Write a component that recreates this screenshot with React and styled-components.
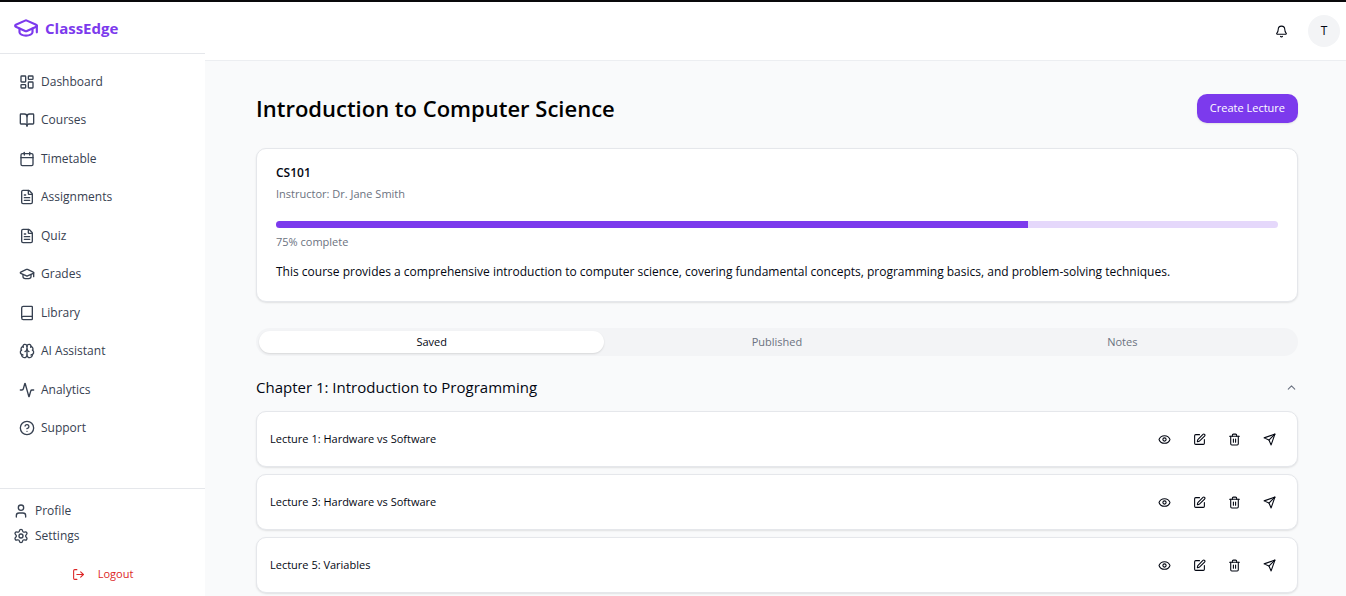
import React from "react";
import styled, { createGlobalStyle, css } from "styled-components";
import {
  LayoutDashboard, BookOpen, Calendar, FileText, GraduationCap, Book, Brain,
  Activity, CircleHelp, User, Settings, LogOut, Bell, Eye, SquarePen, Trash2,
  ChevronUp,
} from "lucide-react";

const GlobalStyle = createGlobalStyle`
  *, *::before, *::after { box-sizing: border-box; }
  body {
    margin: 0;
    background: #f9fafb;
    color: #030712;
    font-family: "Trebuchet MS", "Open Sans", sans-serif;
    font-size: 12px;
    line-height: 20px;
  }
  h1, h2, h3, p, ul { margin: 0; padding: 0; }
  ul { list-style: none; }
  button { font: inherit; color: inherit; background: none; border: 0; padding: 0; cursor: pointer; }
  a { color: inherit; text-decoration: none; }
  svg { display: block; flex: none; }
`;

const Shell = styled.div`
  display: flex;
  height: 100vh;
  border-top: 2px solid #09090b;
  overflow: hidden;
`;

const Sidebar = styled.aside`
  display: flex;
  flex-direction: column;
  flex: none;
  width: 205px;
  background: #fff;
`;

const Brand = styled.a`
  display: flex;
  align-items: center;
  gap: 6px;
  height: 52px;
  padding: 0 13px;
  border-bottom: 1px solid #e5e7eb;
  color: #7c3aed;
  font-size: 15px;
  font-weight: 700;
`;

const NavList = styled.ul`
  display: flex;
  flex-direction: column;
  flex: 1;
  justify-content: space-between;
  padding: 12px 13px 44px;
`;

const NavLink = styled.a`
  display: flex;
  align-items: center;
  gap: 6px;
  height: 32px;
  padding: 0 6px;
  color: #374151;
`;

const AccountArea = styled.div`
  display: flex;
  flex-direction: column;
  gap: 5px;
  padding: 12px 13px 8px;
  border-top: 1px solid #e5e7eb;
`;

const AccountLink = styled.a`
  display: flex;
  align-items: center;
  gap: 6px;
  color: #374151;
`;

const LogoutButton = styled.button`
  display: flex;
  align-items: center;
  justify-content: center;
  gap: 13px;
  height: 28px;
  margin-top: 9px;
  color: #dc2626;
  font-size: 11px;
`;

const Main = styled.div`
  display: flex;
  flex-direction: column;
  flex: 1;
  min-width: 0;
`;

const TopBar = styled.header`
  display: flex;
  align-items: center;
  justify-content: flex-end;
  flex: none;
  gap: 20px;
  height: 59px;
  padding: 0 6px;
  background: #fff;
  border-bottom: 1px solid #eceef1;
`;

const Avatar = styled.button`
  width: 32px;
  height: 32px;
  border-radius: 50%;
  background: #f3f4f6;
`;

const Content = styled.main`
  flex: 1;
  min-height: 0;
  overflow-y: auto;
  padding: 31px 48px 0 51px;
`;

const TitleRow = styled.div`
  display: flex;
  align-items: center;
  justify-content: space-between;
  margin-bottom: 24px;
`;

const Title = styled.h1`
  font-size: 22px;
  line-height: 32px;
  font-weight: 600;
  color: #000;
`;

const PrimaryButton = styled.button`
  height: 29px;
  padding: 0 13px;
  border-radius: 10px;
  background: #7c3aed;
  color: #fff;
  font-size: 11px;
  font-weight: 500;
  box-shadow: 0 1px 2px rgba(0, 0, 0, 0.1);
`;

const card = css`
  background: #fff;
  border: 1px solid #e5e7eb;
  border-radius: 10px;
  box-shadow: 0 1px 2px rgba(0, 0, 0, 0.1);
`;

const CourseCard = styled.section`
  ${card}
  padding: 14px 19px 19px;
`;

const CourseCode = styled.h2`
  margin-bottom: 1px;
  font-size: 12px;
  font-weight: 600;
`;

const Muted = styled.p`
  color: #6b7280;
  font-size: 11px;
`;

const Track = styled.div`
  height: 7px;
  margin: 17px 0 4px;
  border-radius: 4px;
  background: #e5d8fb;
  overflow: hidden;
`;

const Fill = styled.div`
  height: 100%;
  background: #7c3aed;
`;

const Description = styled.p`
  margin-top: 10px;
  font-weight: 500;
`;

const Tabs = styled.div`
  display: grid;
  grid-template-columns: repeat(3, 1fr);
  height: 28px;
  margin: 26px 0 20px;
  padding: 3px;
  border-radius: 14px;
  background: #f3f4f6;
`;

const Tab = styled.button`
  border-radius: 11px;
  font-size: 11px;
  font-weight: 500;
  color: ${(p) => (p.$active ? "#030712" : "#6b7280")};
  background: ${(p) => (p.$active ? "#fff" : "transparent")};
  box-shadow: ${(p) => (p.$active ? "0 1px 2px rgba(0, 0, 0, 0.12)" : "none")};
`;

const ChapterToggle = styled.button`
  display: flex;
  align-items: center;
  justify-content: space-between;
  width: 100%;
  font-size: 15px;
  line-height: 22px;
  font-weight: 500;
`;

const LectureList = styled.ul`
  display: flex;
  flex-direction: column;
  gap: 7px;
  margin-top: 13px;
`;

const Lecture = styled.li`
  ${card}
  display: flex;
  align-items: center;
  justify-content: space-between;
  height: 56px;
  padding: 0 10px 0 13px;
`;

const LectureName = styled.h3`
  font-size: 11px;
  font-weight: 500;
`;

const Actions = styled.div`
  display: flex;
`;

const IconButton = styled.button`
  display: grid;
  place-items: center;
  width: 35px;
  height: 28px;
`;

function Send({ size }) {
  return (
    <svg width={size} height={size} viewBox="0 0 24 24" fill="none" stroke="currentColor" strokeWidth="2" strokeLinecap="round" strokeLinejoin="round">
      <path d="m22 2-7 20-4-9-9-4Z" />
      <path d="M22 2 11 13" />
    </svg>
  );
}

const navItems = [
  ["Dashboard", LayoutDashboard], ["Courses", BookOpen], ["Timetable", Calendar],
  ["Assignments", FileText], ["Quiz", FileText], ["Grades", GraduationCap],
  ["Library", Book], ["AI Assistant", Brain], ["Analytics", Activity], ["Support", CircleHelp],
];

const actions = [["View", Eye], ["Edit", SquarePen], ["Delete", Trash2], ["Publish", Send]];
const lectures = ["Lecture 1: Hardware vs Software", "Lecture 3: Hardware vs Software", "Lecture 5: Variables"];
const progress = 75;

export default function App() {
  return (
    <>
      <GlobalStyle />
      <Shell>
        <Sidebar>
          <Brand href="#"><GraduationCap size={26} />ClassEdge</Brand>
          <NavList>
            {navItems.map(([label, Icon]) => (
              <li key={label}><NavLink href="#"><Icon size={16} />{label}</NavLink></li>
            ))}
          </NavList>
          <AccountArea>
            <AccountLink href="#"><User size={16} />Profile</AccountLink>
            <AccountLink href="#"><Settings size={16} />Settings</AccountLink>
            <LogoutButton><LogOut size={13} />Logout</LogoutButton>
          </AccountArea>
        </Sidebar>
        <Main>
          <TopBar>
            <button aria-label="Notifications"><Bell size={13} /></button>
            <Avatar>T</Avatar>
          </TopBar>
          <Content>
            <TitleRow>
              <Title>Introduction to Computer Science</Title>
              <PrimaryButton>Create Lecture</PrimaryButton>
            </TitleRow>
            <CourseCard>
              <CourseCode>CS101</CourseCode>
              <Muted>Instructor: Dr. Jane Smith</Muted>
              <Track role="progressbar" aria-label="Course progress" aria-valuenow={progress}>
                <Fill style={{ width: `${progress}%` }} />
              </Track>
              <Muted>{progress}% complete</Muted>
              <Description>
                This course provides a comprehensive introduction to computer science, covering fundamental
                concepts, programming basics, and problem-solving techniques.
              </Description>
            </CourseCard>
            <Tabs role="tablist">
              {["Saved", "Published", "Notes"].map((t, i) => (
                <Tab key={t} role="tab" aria-selected={i === 0} $active={i === 0}>{t}</Tab>
              ))}
            </Tabs>
            <ChapterToggle aria-expanded="true">Chapter 1: Introduction to Programming<ChevronUp size={13} color="#6b7280" /></ChapterToggle>
            <LectureList>
              {lectures.map((name) => (
                <Lecture key={name}>
                  <LectureName>{name}</LectureName>
                  <Actions>
                    {actions.map(([label, Icon]) => (
                      <IconButton key={label} aria-label={label}><Icon size={13} /></IconButton>
                    ))}
                  </Actions>
                </Lecture>
              ))}
            </LectureList>
          </Content>
        </Main>
      </Shell>
    </>
  );
}
